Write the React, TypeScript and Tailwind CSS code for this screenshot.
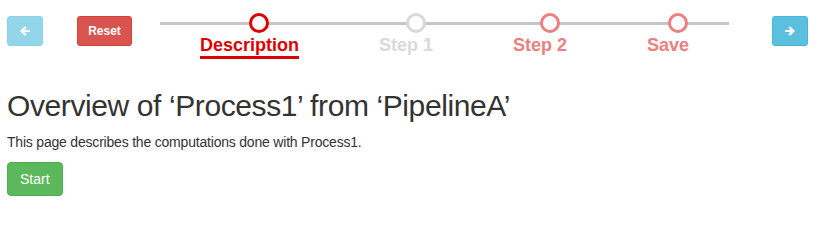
const steps = [
  { label: "Description", text: "text-[#d00]", ring: "border-[#d00]", active: true },
  { label: "Step 1", text: "text-[#dadada]", ring: "border-[#d8d8d8]", active: false },
  { label: "Step 2", text: "text-[#ec7f7f]", ring: "border-[#ec7f7f]", active: false },
  { label: "Save", text: "text-[#ec7f7f]", ring: "border-[#ec7f7f]", active: false },
];

function Arrow({ dir }: { dir: "left" | "right" }) {
  return (
    <svg
      width="12"
      height="12"
      viewBox="0 0 12 12"
      className={dir === "left" ? "" : "rotate-180"}
    >
      <path
        d="M1 6 L6 1.2 L7.6 2.8 L5.4 5 H11 V7 H5.4 L7.6 9.2 L6 10.8 Z"
        fill="white"
      />
    </svg>
  );
}

export default function App() {
  return (
    <div className="px-[7px] font-['Liberation_Sans',Arial,sans-serif] text-[#333]">
      <div className="flex items-start">
        <button className="mt-4 flex h-[30px] w-[36px] items-center justify-center rounded-[3px] border border-[#8fd0e6] bg-[#94d6e9]">
          <Arrow dir="left" />
        </button>
        <button className="ml-[34px] mt-4 flex h-[30px] w-[55px] items-center justify-center rounded-[3px] border border-[#d43f3a] bg-[#d9534f] text-[12px] font-bold text-white">
          Reset
        </button>

        <div className="relative ml-[28px] w-[569px]">
          <div className="absolute inset-x-0 top-[22px] h-[3px] bg-[#c6c6c6]" />
          <div className="relative flex justify-around">
            {steps.map((s) => (
              <div key={s.label} className="relative pt-[35px]">
                <span
                  className={`absolute left-1/2 top-[13px] h-5 w-5 rounded-full border-[3px] bg-white ${s.ring}`}
                />
                <div
                  className={`border-b-[3px] pb-[1px] text-[18px] font-bold leading-[20px] ${s.text} ${
                    s.active ? "border-[#d00]" : "border-transparent"
                  }`}
                >
                  {s.label}
                </div>
              </div>
            ))}
          </div>
        </div>

        <button className="ml-[43px] mt-4 flex h-[30px] w-[36px] items-center justify-center rounded-[3px] border border-[#46b8da] bg-[#5bc0de]">
          <Arrow dir="right" />
        </button>
      </div>

      <div className="mt-[30px]">
        <h2 className="mb-[10px] text-[30px] leading-[33px] tracking-[-0.4px]">
          Overview of ‘Process1’ from ‘PipelineA’
        </h2>
        <p className="mb-[10px] text-[14px] leading-5 tracking-[-0.2px]">
          This page describes the computations done with Process1.
        </p>
        <button className="h-[34px] rounded-[4px] border border-[#4cae4c] bg-[#5cb85c] px-3 text-[14px] text-white">
          Start
        </button>
      </div>
    </div>
  );
}
